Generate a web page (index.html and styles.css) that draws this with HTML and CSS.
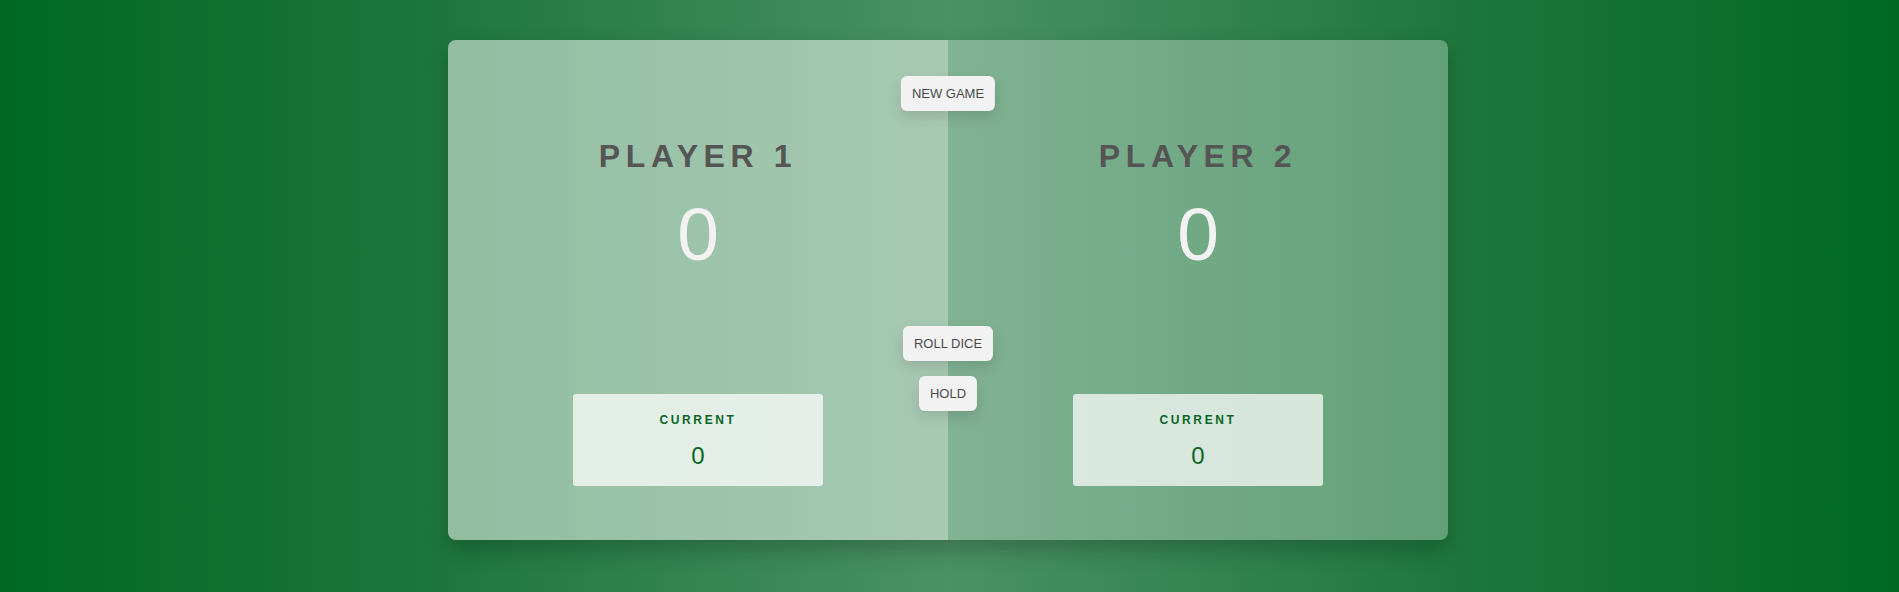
FILE: index.html
```html
<!DOCTYPE html>
<html lang="en">
<head>
<meta charset="utf-8">
<title>Pig Game</title>
<link rel="stylesheet" href="styles.css">
</head>
<body>
<main class="board">
  <section class="player player--active">
    <h2 class="name">Player 1</h2>
    <p class="score">0</p>
    <div class="current">
      <p class="current-label">Current</p>
      <p class="current-score">0</p>
    </div>
  </section>
  <section class="player">
    <h2 class="name">Player 2</h2>
    <p class="score">0</p>
    <div class="current">
      <p class="current-label">Current</p>
      <p class="current-score">0</p>
    </div>
  </section>
  <button class="btn btn--new">New game</button>
  <button class="btn btn--roll">Roll dice</button>
  <button class="btn btn--hold">Hold</button>
</main>
</body>
</html>
```

FILE: styles.css
```css
* {
  margin: 0;
  padding: 0;
  box-sizing: border-box;
}

html, body {
  height: 100%;
}

body {
  font-family: "Liberation Sans", Arial, sans-serif;
  color: #555;
  background-image: linear-gradient(to right, #006823 0%, #1b763b 22%, #4b9163 50%, #1b763b 78%, #006823 100%);
  display: flex;
  justify-content: center;
  align-items: flex-start;
  padding: 40px 3px 0 0;
}

.board {
  position: relative;
  width: 1000px;
  height: 500px;
  display: flex;
  background-color: rgba(255, 255, 255, 0.3);
  border-radius: 8px;
  overflow: hidden;
  box-shadow: 0 10px 22px rgba(0, 0, 0, 0.22);
}

.player {
  flex: 1;
  display: flex;
  flex-direction: column;
  align-items: center;
  padding: 100px 0 54px;
}

.player--active {
  background-color: rgba(255, 255, 255, 0.31);
}

.name {
  font-size: 32px;
  line-height: 32px;
  font-weight: 700;
  text-transform: uppercase;
  letter-spacing: 5.6px;
  color: #555;
}

.score {
  margin-top: 25px;
  font-size: 75px;
  line-height: 75px;
  font-weight: 400;
  color: #f2f2f2;
}

.current {
  margin-top: auto;
  width: 250px;
  height: 92px;
  padding-top: 20px;
  background-color: rgba(255, 255, 255, 0.72);
  border-radius: 3px;
  text-align: center;
  color: #0a6628;
}

.current-label {
  font-size: 12px;
  line-height: 12px;
  font-weight: 700;
  text-transform: uppercase;
  letter-spacing: 2.6px;
}

.current-score {
  margin-top: 18px;
  font-size: 24px;
  line-height: 24px;
}

.btn {
  position: absolute;
  left: 50%;
  transform: translateX(-50%);
  height: 35px;
  padding: 0 11px;
  border: none;
  border-radius: 6px;
  background-color: #f2f2f2;
  color: #4a4a4a;
  font-family: "Liberation Sans", Arial, sans-serif;
  font-size: 13px;
  text-transform: uppercase;
  box-shadow: 0 6px 14px rgba(0, 0, 0, 0.12);
  cursor: pointer;
}

.btn--new { top: 36px; }
.btn--roll { top: 286px; }
.btn--hold { top: 336px; }
```
